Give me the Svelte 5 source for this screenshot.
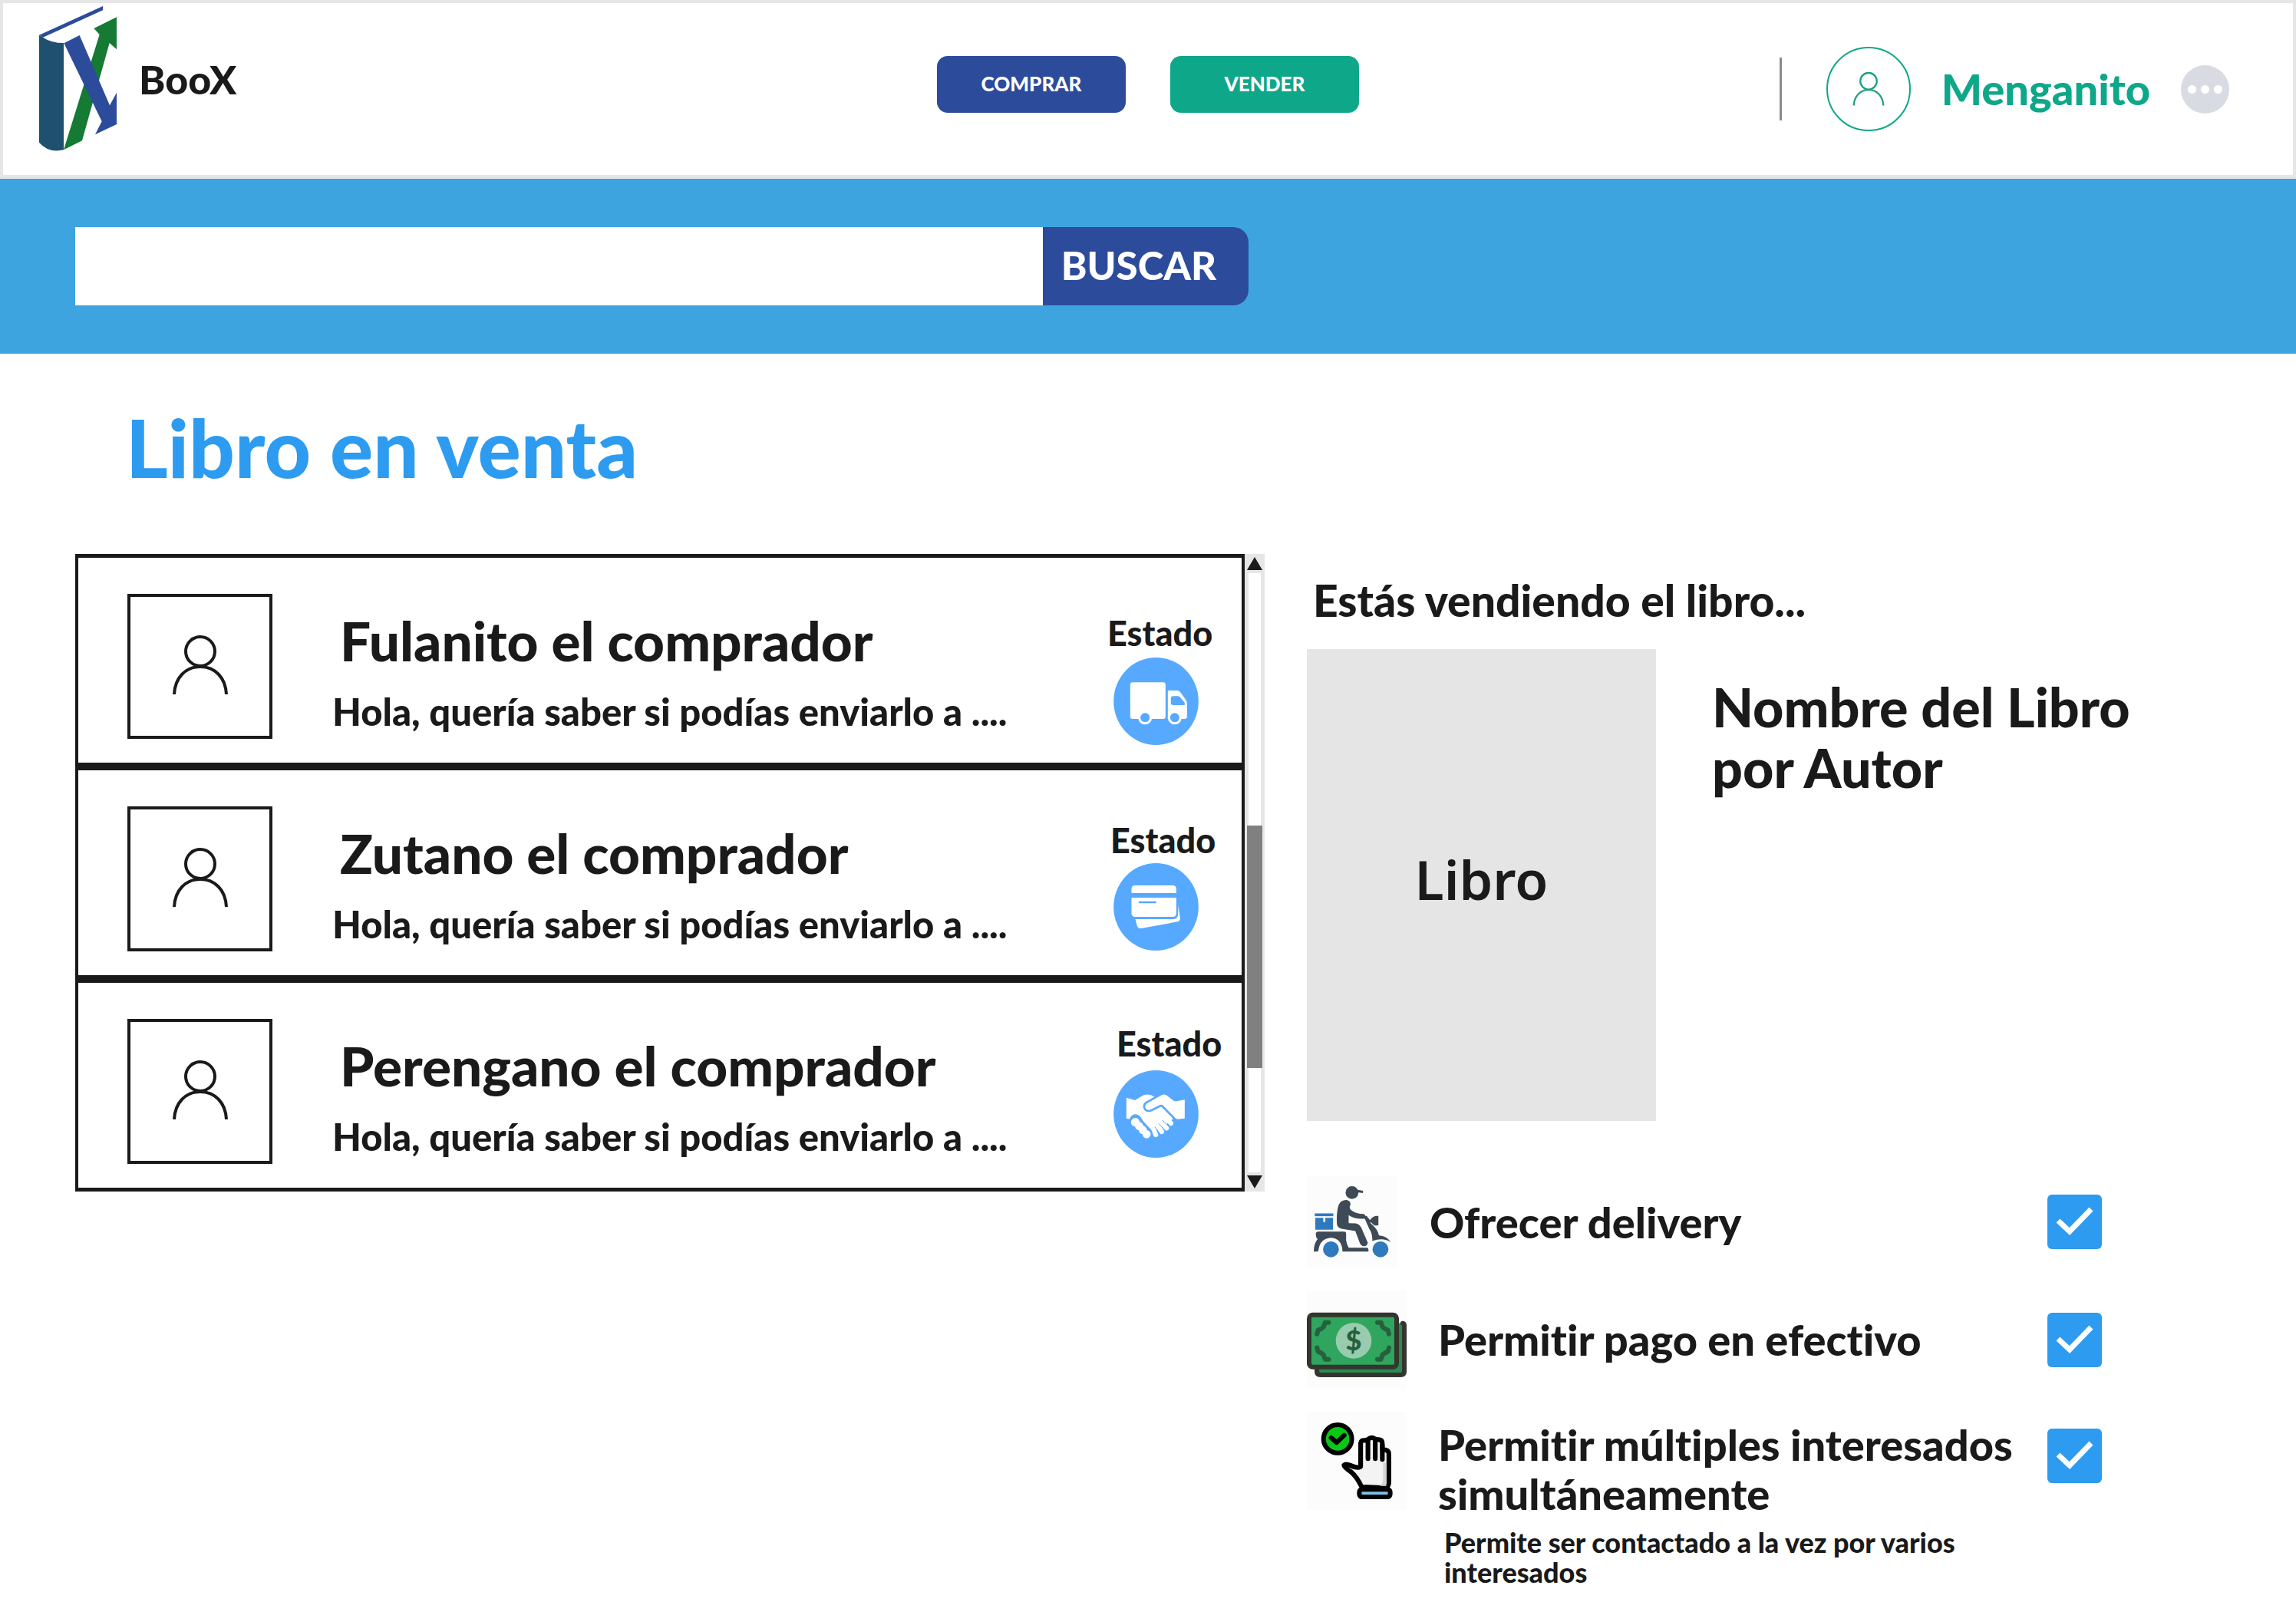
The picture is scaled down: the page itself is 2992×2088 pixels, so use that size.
<script>
  let query = $state('');

  const message = 'Hola, quería saber si podías enviarlo a ....';
  const buyers = [
    { name: 'Fulanito el comprador', status: 'shipping' },
    { name: 'Zutano el comprador', status: 'payment' },
    { name: 'Perengano el comprador', status: 'deal' }
  ];

  let options = $state([
    { id: 'delivery', label: 'Ofrecer delivery', checked: true },
    { id: 'cash', label: 'Permitir pago en efectivo', checked: true },
    {
      id: 'multiple',
      label: 'Permitir múltiples interesados simultáneamente',
      note: 'Permite ser contactado a la vez por varios interesados',
      checked: true
    }
  ]);
</script>

{#snippet person()}
  <svg class="person" viewBox="0 0 74 80" aria-hidden="true">
    <circle cx="37" cy="22" r="19" />
    <path d="M3 78C4 56 18 42 37 42S70 56 71 78" />
  </svg>
{/snippet}

{#snippet statusIcon(kind)}
  <svg class="status-icon" viewBox="0 0 332 342" role="img" aria-label={kind}>
    <ellipse cx="166" cy="171" rx="166" ry="171" fill="#57a9ff" />
    {#if kind === 'shipping'}
      <g fill="#fff">
        <rect x="65" y="97" width="138" height="143" rx="9" />
        <path d="M212 129H248Q256 129 261 136L282 165Q287 172 287 181V231Q287 240 278 240H212Z" />
        <circle cx="123" cy="235" r="27" />
        <circle cx="239" cy="235" r="27" />
      </g>
      <g fill="#57a9ff">
        <path d="M233 151H252Q257 151 261 156L278 177V186H232Q224 186 224 178V160Q224 151 233 151Z" />
        <circle cx="123" cy="235" r="18" />
        <circle cx="239" cy="235" r="18" />
      </g>
    {:else if kind === 'payment'}
      <g fill="#fff">
        <path d="M84 87H231Q245 87 245 101V117H70V101Q70 87 84 87Z" />
        <path d="M70 135H245V196Q245 210 231 210H84Q70 210 70 196Z" />
        <path d="M85 219H234Q251 217 252 200V165L260 213Q261 226 250 229L108 255Q96 257 92 246Z" />
      </g>
      <path d="M101 153H164" stroke="#57a9ff" stroke-width="7" stroke-linecap="round" />
    {:else}
      <path d="M50 107L84 117Q105 104 118 97Q140 90 160 104L205 140L232 190L190 225L150 235L120 205L92 176Q80 174 64 191L50 188Z" fill="#fff" />
      <g stroke="#fff" stroke-width="19" stroke-linecap="round">
        <path d="M180 155L224 207" />
        <path d="M160 165L207 226" />
        <path d="M145 170L188 240" />
        <path d="M130 170L165 252" />
      </g>
      <g stroke="#57a9ff" stroke-width="3" stroke-linecap="round">
        <path d="M192 196L216 219" />
        <path d="M177 209L200 234" />
        <path d="M162 222L178 246" />
      </g>
      <path d="M86 195L99 215L114 232L130 249" fill="none" stroke="#57a9ff" stroke-width="46" stroke-linecap="round" />
      <g fill="#fff">
        <circle cx="85" cy="203" r="17" />
        <circle cx="100" cy="218" r="16" />
        <circle cx="114" cy="233" r="16" />
        <circle cx="129" cy="250" r="16" />
      </g>
      <path d="M278 115V188L252 191Q245 191 240 185L195 139Q189 132 180 136L146 153Q130 159 124 146Q121 136 131 129L188 97Q199 91 209 99L233 118Q238 122 246 121Z" fill="#fff" stroke="#57a9ff" stroke-width="16" paint-order="stroke" />
    {/if}
  </svg>
{/snippet}

{#snippet optionIcon(id)}
  {#if id === 'delivery'}
    <svg class="option-icon small" viewBox="0 0 356 356" aria-hidden="true">
      <g fill="#3e4a55">
        <circle cx="176" cy="64" r="25" />
        <path d="M180 50L219 57V66L196 63Z" />
        <path d="M124 112Q134 92 156 93Q172 98 170 112Q162 124 174 133Q192 147 221 147Q229 150 229 157V165Q205 168 184 162Q170 158 163 152V183L190 184Q206 187 213 203L237 258Q238 272 224 273Q211 273 207 262L189 214L135 205Q117 200 117 183Q115 140 124 112Z" />
        <path d="M222 157L233 155L246 171Q260 152 279 155V191Q264 197 251 180L247 178L250 185Q276 206 281 231Q312 232 328 258Q298 237 255 253Q257 225 243 205Z" />
        <path d="M35 225Q35 216 45 216H145Q153 216 153 225V250Q155 265 163 279H235Q242 280 240 294H139Q137 243 95 240Q52 243 46 285L43 294H27Q27 262 42 245Q34 238 35 225Z" />
      </g>
      <g fill="#2f7abf">
        <circle cx="94" cy="285" r="31" />
        <circle cx="287" cy="285" r="31" />
        <rect x="31" y="145" width="72" height="11" />
        <path d="M33 162H64V179H72V162H102V209H33Z" />
      </g>
    </svg>
  {:else if id === 'cash'}
    <svg class="option-icon" viewBox="0 0 390 384" aria-hidden="true">
      <path d="M39 300V316Q39 330 53 330H367Q381 330 381 316V128H350V300Z" fill="#2a8a50" />
      <path d="M39 300V316Q39 330 53 330H367Q381 330 381 316V136Q381 129 374 128" fill="none" stroke="#34352f" stroke-width="18" stroke-linecap="round" />
      <rect x="9" y="95" width="342" height="204" rx="14" fill="#2fa55e" stroke="#34352f" stroke-width="18" />
      <circle cx="183" cy="196" r="70" fill="#99cbae" />
      <g fill="none" stroke="#26603d" stroke-width="18" stroke-linecap="round" stroke-linejoin="round">
        <path d="M85 125H71L66 141Q61 149 44 155L40 170" />
        <path d="M276 125H290L295 141Q300 149 317 155L321 170" />
        <path d="M85 269H71L66 253Q61 245 44 239L40 224" />
        <path d="M276 269H290L295 253Q300 245 317 239L321 224" />
      </g>
      <text class="dollar" x="183" y="234" text-anchor="middle">$</text>
    </svg>
  {:else}
    <svg class="option-icon" viewBox="0 0 378 376" aria-hidden="true">
      <g stroke="#000" stroke-width="18" stroke-linecap="round" stroke-linejoin="round">
        <circle cx="116" cy="104" r="54" fill="#0cc617" />
        <path d="M91 100L112 118L141 90" fill="none" />
        <path d="M208 288Q190 250 168 231Q140 212 140 205Q147 197 166 206Q190 218 204 210V120Q205 108 220 110L232 106Q245 94 259 104L274 107Q287 108 287 122V145Q312 144 312 162V275L305 292Z" fill="#f3f3f3" />
        <path d="M232 108V180M260 106V180M287 130V183" />
        <rect x="199" y="297" width="118" height="29" rx="10" fill="#7cc3ea" />
      </g>
      <path d="M290 195H302V284H278Q290 275 290 255Z" fill="#d4d4d4" />
    </svg>
  {/if}
{/snippet}

<div class="page">
  <header class="topbar">
    <a class="brand" href="#inicio">
      <svg class="logo" viewBox="153 24 303 567" aria-hidden="true">
        <path d="M153 137L402 24V40L168 146Z" fill="#2c4b9b" />
        <path d="M153 137L168 146Q200 168 249 168V586Q190 600 153 557Z" fill="#20506f" />
        <path d="M249 586L389 135L367 111L456 67V193L428 168L321 550Z" fill="#147a34" />
        <path d="M250 169L311 138L429 412L456 362V486L372 526L398 475Z" fill="#2c4b9b" />
      </svg>
      <span>BooX</span>
    </a>
    <nav class="actions">
      <button class="buy" type="button">COMPRAR</button>
      <button class="sell" type="button">VENDER</button>
    </nav>
    <div class="user">
      <span class="separator"></span>
      <span class="user-avatar">{@render person()}</span>
      <span class="user-name">Menganito</span>
      <button class="more" type="button" aria-label="Más opciones"><i></i><i></i><i></i></button>
    </div>
  </header>

  <div class="search-band">
    <form class="search" onsubmit={(e) => e.preventDefault()}>
      <input type="search" aria-label="Buscar libros" bind:value={query} />
      <button type="submit">BUSCAR</button>
    </form>
  </div>

  <main>
    <h1>Libro en venta</h1>
    <div class="columns">
      <section class="inbox" aria-label="Compradores">
        <ul>
          {#each buyers as buyer}
            <li>
              <span class="avatar">{@render person()}</span>
              <div class="text">
                <h2>{buyer.name}</h2>
                <p>{message}</p>
              </div>
              <div class="status {buyer.status}">
                <span>Estado</span>
                {@render statusIcon(buyer.status)}
              </div>
            </li>
          {/each}
        </ul>
        <div class="scrollbar" aria-hidden="true">
          <svg viewBox="0 0 20 17"><path d="M10 0L20 17H0Z" /></svg>
          <div class="track"><div class="thumb"></div></div>
          <svg viewBox="0 0 20 17"><path d="M0 0H20L10 17Z" /></svg>
        </div>
      </section>

      <section class="sale">
        <h3>Estás vendiendo el libro...</h3>
        <div class="book">
          <div class="cover">Libro</div>
          <p>Nombre del Libro<br />por Autor</p>
        </div>
        <div class="options">
          {#each options as option}
            <div class="option" class:tall={option.note}>
              {@render optionIcon(option.id)}
              <div class="option-text">
                <label for={option.id}>{option.label}</label>
                {#if option.note}<small>{option.note}</small>{/if}
              </div>
              <span class="check">
                <input id={option.id} type="checkbox" bind:checked={option.checked} />
                {#if option.checked}
                  <svg viewBox="0 0 71 71" aria-hidden="true"><path d="M14 34L29 48L57 19" /></svg>
                {/if}
              </span>
            </div>
          {/each}
        </div>
      </section>
    </div>
  </main>
</div>

<style>
  :global(body) {
    margin: 0;
    background: #fff;
  }
  .page {
    color: #1a1a1a;
    font-family: Lato, 'Open Sans', sans-serif;
    font-weight: 900;
    font-variant-ligatures: none;
  }
  h1, h2, h3, p, ul {
    margin: 0;
    padding: 0;
    font-weight: 900;
  }
  button, input {
    font: inherit;
    border: 0;
    margin: 0;
    padding: 0;
  }
  svg {
    display: block;
    flex: none;
  }

  .topbar {
    display: grid;
    grid-template-columns: 1fr auto 1fr;
    align-items: start;
    box-sizing: border-box;
    height: 233px;
    border: 4px solid #e6e6e6;
    border-bottom-width: 5px;
  }
  .brand {
    display: flex;
    align-items: center;
    gap: 29px;
    padding: 4px 0 0 47px;
    color: inherit;
    text-decoration: none;
    font-size: 52px;
    line-height: 64px;
  }
  .logo {
    width: 101px;
    height: 189px;
  }
  .actions {
    display: flex;
    gap: 58px;
    padding-top: 69px;
  }
  .actions button {
    width: 246px;
    height: 74px;
    padding-bottom: 2px;
    border-radius: 14px;
    color: #fff;
    font-size: 26px;
  }
  .buy { background: #2c4b9b; }
  .sell { background: #0ea789; }
  .user {
    display: flex;
    align-items: center;
    justify-content: flex-end;
    padding: 57px 83px 0 0;
  }
  .separator {
    width: 3px;
    height: 82px;
    margin-right: 58px;
    background: #8a8a8a;
  }
  .user-avatar {
    display: grid;
    place-items: center;
    box-sizing: border-box;
    width: 110px;
    height: 110px;
    border: 2px solid #0ea789;
    border-radius: 50%;
    color: #1f9f86;
  }
  .user-name {
    margin: 0 40px 0 40px;
    color: #0ea789;
    font-size: 56px;
    line-height: 64px;
  }
  .more {
    display: flex;
    align-items: center;
    justify-content: center;
    gap: 6px;
    width: 63px;
    height: 63px;
    border-radius: 50%;
    background: #d8dbe1;
  }
  .more i {
    width: 11px;
    height: 11px;
    border-radius: 50%;
    background: #fff;
  }

  .person {
    width: 74px;
    height: 80px;
    fill: none;
    stroke: currentColor;
    stroke-width: 4;
  }
  .avatar .person {
    margin-bottom: 4px;
  }
  .user-avatar .person {
    width: 42px;
    height: 46px;
  }

  .search-band {
    padding: 63px 98px;
    background: #3ea4e0;
  }
  .search {
    display: flex;
    max-width: 1529px;
    height: 102px;
  }
  .search input {
    flex: 1;
    min-width: 0;
    padding: 0 24px;
    border-radius: 0;
    outline: 0;
    background: #fff;
    font-size: 46px;
  }
  .search button {
    width: 268px;
    padding: 0 18px 4px 0;
    border-radius: 0 20px 20px 0;
    background: #2c4b9b;
    color: #fff;
    font-size: 51px;
  }

  main {
    padding: 63px 98px 16px;
  }
  h1 {
    padding: 0 66px 82px;
    color: #2d9bf0;
    font-size: 105px;
    line-height: 116px;
  }
  .columns {
    display: grid;
    grid-template-columns: minmax(0, 1550fr) minmax(0, 1191fr);
    gap: 55px;
    align-items: start;
  }

  .inbox {
    display: flex;
  }
  ul {
    flex: 1;
    min-width: 0;
    list-style: none;
  }
  li {
    display: flex;
    align-items: flex-start;
    box-sizing: border-box;
    height: 277px;
    border: 5px solid #1a1a1a;
    border-width: 5px 4px;
    padding: 0 30px 0 64px;
  }
  .avatar {
    display: grid;
    place-items: center;
    box-sizing: border-box;
    width: 189px;
    height: 189px;
    margin: 47px 78px 0 0;
    border: 4px solid #1a1a1a;
  }
  .text {
    flex: 1;
    padding-top: 68px;
    white-space: nowrap;
  }
  h2 {
    padding-left: 10px;
    font-size: 71px;
    line-height: 80px;
  }
  .text p {
    padding-top: 24px;
    font-size: 49px;
    line-height: 56px;
  }
  .status {
    display: flex;
    flex-direction: column;
    width: 145px;
    font-size: 45px;
    line-height: 48px;
  }
  .status.shipping { padding-top: 74px; gap: 8px; }
  .status.payment { padding-top: 67px; gap: 6px; }
  .status.deal { padding-top: 55px; gap: 11px; }
  .status.payment span { padding-left: 4px; }
  .status.deal span { padding-left: 12px; }
  .status-icon {
    width: 111px;
    height: 114px;
    margin-left: 8px;
  }
  .scrollbar {
    display: flex;
    flex-direction: column;
    align-items: center;
    gap: 4px;
    box-sizing: border-box;
    width: 26px;
    padding: 4px 0;
    background: #e6e6e6;
  }
  .scrollbar svg {
    width: 20px;
    height: 17px;
    fill: #1a1a1a;
  }
  .track {
    flex: 1;
    display: flex;
    justify-content: center;
    width: 16px;
    background: #fff;
  }
  .thumb {
    flex: none;
    align-self: flex-start;
    width: 20px;
    height: 316px;
    margin-top: 329px;
    background: #808080;
  }

  .sale {
    padding-top: 28px;
  }
  h3 {
    padding: 0 8px 32px;
    font-size: 57px;
    line-height: 64px;
  }
  .book {
    display: flex;
    gap: 73px;
  }
  .cover {
    display: grid;
    place-items: center;
    flex: none;
    box-sizing: border-box;
    width: 455px;
    height: 615px;
    padding-bottom: 16px;
    background: #e5e5e5;
    font-family: 'Noto Sans', sans-serif;
    font-size: 70px;
    font-weight: 600;
  }
  .book p {
    padding-top: 36px;
    font-size: 70px;
    line-height: 79px;
  }
  .options {
    display: flex;
    flex-direction: column;
    gap: 30px;
    max-width: 1036px;
    padding-top: 72px;
  }
  .option {
    display: flex;
    align-items: center;
  }
  .option-icon {
    width: 130px;
    height: 128px;
    background: #fcfcfc;
  }
  .option-icon.small {
    width: 119px;
    height: 119px;
  }
  .dollar {
    fill: #26603d;
    font-size: 108px;
    font-weight: 900;
  }
  .option-text {
    flex: 1;
    padding-left: 41px;
    font-size: 56px;
    line-height: 64px;
  }
  .option-text label {
    display: block;
  }
  small {
    display: block;
    padding: 12px 8px 0;
    font-size: 36px;
    line-height: 39px;
  }
  .check {
    display: grid;
    flex: none;
  }
  .check input {
    grid-area: 1 / 1;
    appearance: none;
    width: 71px;
    height: 71px;
    border-radius: 6px;
    background: #2d9bf0;
  }
  .check svg {
    grid-area: 1 / 1;
    width: 71px;
    height: 71px;
    fill: none;
    stroke: #fff;
    stroke-width: 7;
    pointer-events: none;
  }
  .tall {
    align-items: flex-start;
  }
  .tall .option-text {
    padding-top: 11px;
  }
  .tall .check {
    padding-top: 22px;
  }
</style>
